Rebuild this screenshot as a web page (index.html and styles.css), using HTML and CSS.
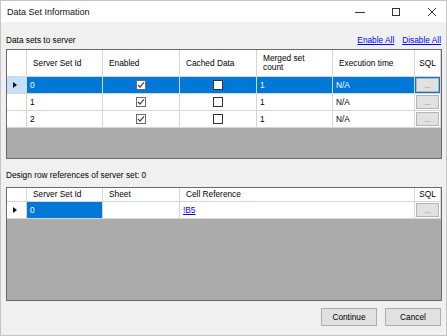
FILE: index.html
```html
<!DOCTYPE html>
<html lang="en">

<head>
    <meta charset="UTF-8">
    <title>Data Set Information</title>
    <link rel="stylesheet" href="styles.css">
</head>

<body>
    <div class="window">
        <div class="titlebar">
            <span class="title">Data Set Information</span>
            <div class="controls">
                <svg width="10" height="10" viewBox="0 0 10 10"><path d="M0 5.5h10" stroke="#333" stroke-width="1"/></svg>
                <svg width="10" height="10" viewBox="0 0 10 10"><rect x="1.5" y="1.5" width="7" height="7" fill="none" stroke="#333" stroke-width="1"/></svg>
                <svg width="10" height="10" viewBox="0 0 10 10"><path d="M1 1L9 9M9 1L1 9" stroke="#333" stroke-width="1"/></svg>
            </div>
        </div>
        <div class="content">
            <div class="section-head">
                <span>Data sets to server</span>
                <div class="links">
                    <a href="javascript:;">Enable All</a>
                    <a href="javascript:;">Disable All</a>
                </div>
            </div>
            <div class="grid grid-sets">
                <div class="row head">
                    <div class="cell"></div>
                    <div class="cell">Server Set Id</div>
                    <div class="cell">Enabled</div>
                    <div class="cell">Cached Data</div>
                    <div class="cell">Merged set<br>count</div>
                    <div class="cell">Execution time</div>
                    <div class="cell center">SQL</div>
                </div>
                <div class="row selected">
                    <div class="cell rowhdr"><i class="arrow"></i></div>
                    <div class="cell">0</div>
                    <div class="cell center"><span class="check on"><svg width="8" height="8" viewBox="0 0 8 8"><path d="M1 4L3 6.2L7 1.3" fill="none" stroke="#444" stroke-width="1.2"/></svg></span></div>
                    <div class="cell center"><span class="check"></span></div>
                    <div class="cell">1</div>
                    <div class="cell">N/A</div>
                    <div class="cell btncell"><span class="dots">...</span></div>
                </div>
                <div class="row">
                    <div class="cell rowhdr"></div>
                    <div class="cell">1</div>
                    <div class="cell center"><span class="check on"><svg width="8" height="8" viewBox="0 0 8 8"><path d="M1 4L3 6.2L7 1.3" fill="none" stroke="#444" stroke-width="1.2"/></svg></span></div>
                    <div class="cell center"><span class="check"></span></div>
                    <div class="cell">1</div>
                    <div class="cell">N/A</div>
                    <div class="cell btncell"><span class="dots">...</span></div>
                </div>
                <div class="row">
                    <div class="cell rowhdr"></div>
                    <div class="cell">2</div>
                    <div class="cell center"><span class="check on"><svg width="8" height="8" viewBox="0 0 8 8"><path d="M1 4L3 6.2L7 1.3" fill="none" stroke="#444" stroke-width="1.2"/></svg></span></div>
                    <div class="cell center"><span class="check"></span></div>
                    <div class="cell">1</div>
                    <div class="cell">N/A</div>
                    <div class="cell btncell"><span class="dots">...</span></div>
                </div>
            </div>

            <div class="section-head second">
                <span>Design row references of server set: 0</span>
            </div>
            <div class="grid grid-refs">
                <div class="row head">
                    <div class="cell"></div>
                    <div class="cell">Server Set Id</div>
                    <div class="cell">Sheet</div>
                    <div class="cell">Cell Reference</div>
                    <div class="cell center">SQL</div>
                </div>
                <div class="row">
                    <div class="cell rowhdr"><i class="arrow"></i></div>
                    <div class="cell picked">0</div>
                    <div class="cell"></div>
                    <div class="cell"><a href="javascript:;">!B5</a></div>
                    <div class="cell btncell"><span class="dots">...</span></div>
                </div>
            </div>

            <div class="actions">
                <button>Continue</button>
                <button>Cancel</button>
            </div>
        </div>
    </div>
</body>

</html>
```

FILE: styles.css
```css
body {
    margin: 0;
    font-family: "Liberation Sans", Arial, sans-serif;
    font-size: 8.3px;
    color: #000;
}

.window {
    display: flex;
    flex-direction: column;
    width: 447px;
    height: 336px;
    box-sizing: border-box;
    border: 1px solid #c4c4c4;
    background-color: #f0f0f0;
}

.titlebar {
    display: flex;
    align-items: center;
    justify-content: space-between;
    height: 21px;
    padding-left: 6px;
    background-color: #fff;
}

.title {
    font-size: 9px;
    color: #111;
}

.controls {
    display: flex;
    gap: 26px;
    padding-right: 9px;
}

.content {
    flex: 1;
    padding: 0 4px 0 5px;
}

.section-head {
    display: flex;
    justify-content: space-between;
    align-items: center;
    height: 12px;
    margin: 12px 0 3px;
}

.section-head.second {
    margin: 10px 0 6px;
}

.links {
    display: flex;
    gap: 8px;
    padding-right: 1px;
}

a {
    color: #0000ff;
    text-decoration: underline;
}

.grid {
    box-sizing: border-box;
    border: 1px solid #6a6a6a;
    background-color: #ababab;
}

.grid-sets {
    height: 110px;
}

.grid-refs {
    height: 114px;
}

.row {
    display: grid;
    height: 17px;
}

.grid-sets .row {
    grid-template-columns: 20px 76px 77px 77px 76px 82px 26px;
}

.grid-refs .row {
    grid-template-columns: 20px 76px 77px 235px 26px;
}

.grid-sets .row.head {
    height: 27px;
}

.grid-refs .row.head {
    height: 14px;
}

.cell {
    display: flex;
    align-items: center;
    box-sizing: border-box;
    padding-left: 3px;
    border-right: 1px solid #d6d6d6;
    border-bottom: 1px solid #d6d6d6;
    background-color: #fff;
    white-space: nowrap;
    overflow: hidden;
}

.head .cell {
    padding-left: 6px;
    line-height: 9px;
}

.cell.center,
.head .cell.center {
    justify-content: center;
    padding-left: 0;
}

.selected .cell {
    background-color: #0078d7;
    color: #fff;
}

.selected .cell.rowhdr {
    background-color: #c6e1f7;
}

.cell.picked {
    background-color: #0078d7;
    color: #fff;
}

.arrow {
    width: 0;
    height: 0;
    margin-left: 3px;
    border-top: 3px solid transparent;
    border-bottom: 3px solid transparent;
    border-left: 4px solid #111;
}

.check {
    display: flex;
    align-items: center;
    justify-content: center;
    width: 10px;
    height: 10px;
    box-sizing: border-box;
    border: 1px solid #333;
    background-color: #fff;
}

.check.on {
    border-color: #6a6a6a;
}

.btncell {
    padding: 1px 1px 1px 1px;
}

.dots {
    display: flex;
    align-items: flex-end;
    justify-content: center;
    width: 100%;
    height: 100%;
    box-sizing: border-box;
    border: 1px solid #b5b5b5;
    background-color: #e1e1e1;
    color: #666;
    font-size: 7px;
    line-height: 10px;
}

.actions {
    display: flex;
    justify-content: flex-end;
    gap: 8px;
    margin-top: 7px;
    padding-right: 1px;
}

button {
    width: 56px;
    height: 18px;
    padding: 0;
    border: 1px solid #adadad;
    background-color: #e1e1e1;
    font-family: "Liberation Sans", Arial, sans-serif;
    font-size: 8.3px;
    color: #000;
}
```
